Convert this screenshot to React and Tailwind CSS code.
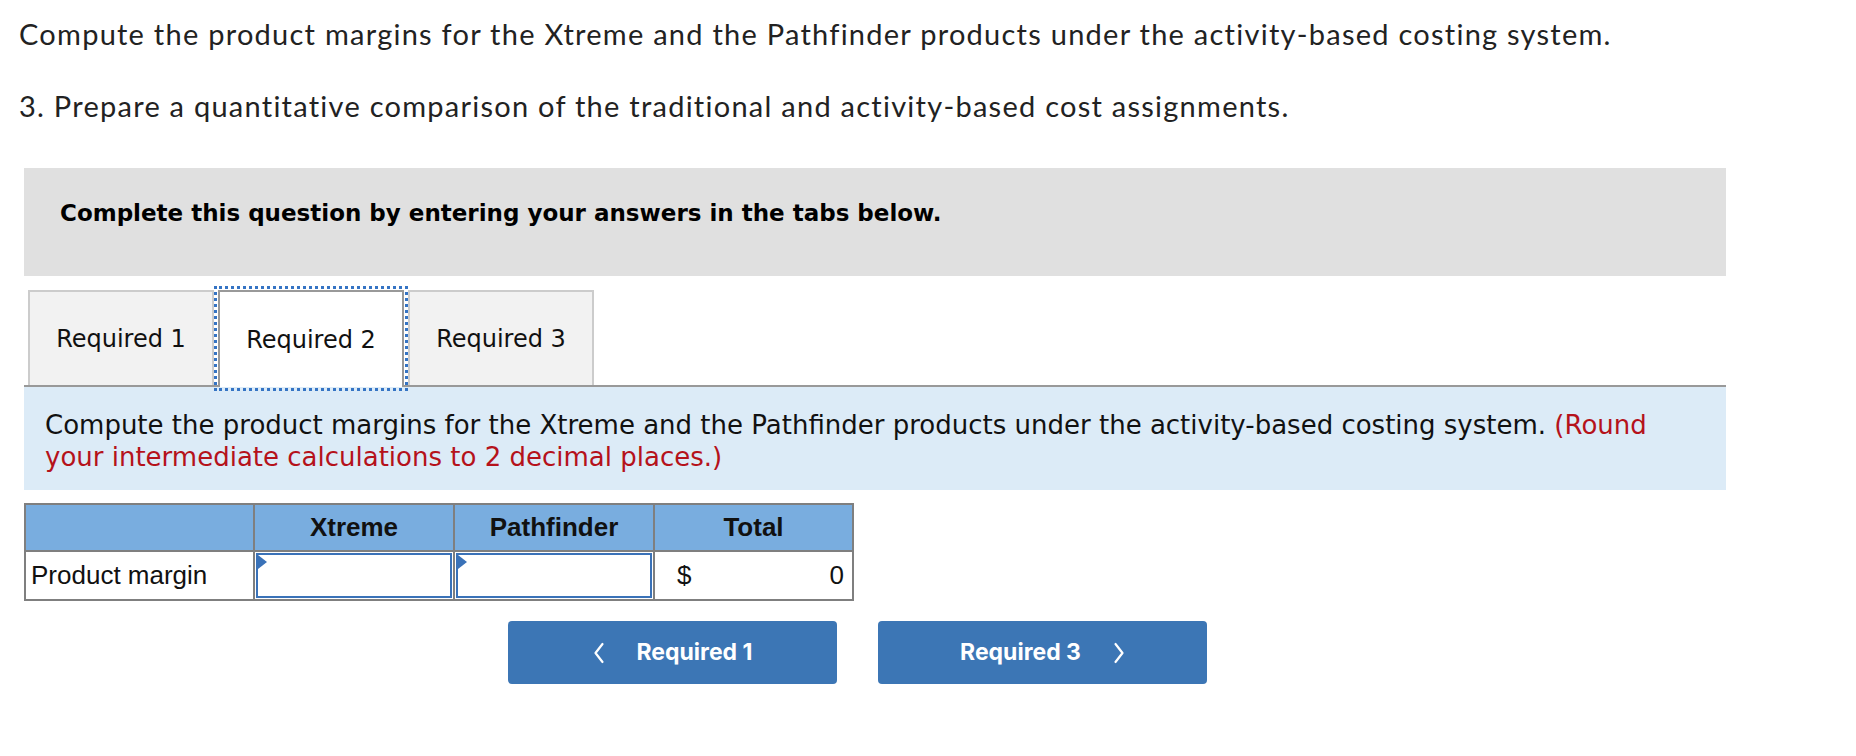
import React from "react";

const tahoma = { fontFamily: '"DejaVu Sans", Verdana, sans-serif' };

function ChevronLeft() {
  return (
    <svg width="12" height="22" viewBox="0 0 12 22" fill="none" stroke="white" strokeWidth="2.2" strokeLinecap="round" strokeLinejoin="round">
      <path d="M9.5 2 L2.5 11 L9.5 20" />
    </svg>
  );
}
function ChevronRight() {
  return (
    <svg width="12" height="22" viewBox="0 0 12 22" fill="none" stroke="white" strokeWidth="2.2" strokeLinecap="round" strokeLinejoin="round">
      <path d="M2.5 2 L9.5 11 L2.5 20" />
    </svg>
  );
}

function InputCell() {
  return (
    <td className="border-2 border-[#7f7f7f] p-0 h-[49px] bg-white">
      <div className="relative h-[45px] mx-[1px] border-2 border-[#3a72b8] bg-white">
        <div className="absolute left-0 top-0 w-0 h-0 border-t-[7px] border-b-[7px] border-l-[9px] border-t-transparent border-b-transparent border-l-[#3a72b8]" />
      </div>
    </td>
  );
}

export default function App() {
  return (
    <div className="w-[1856px] h-[756px] bg-white overflow-hidden">
      <div className="pl-[19px] pt-[15px] text-[29px] leading-[38px] tracking-[1.25px] text-[#222]" style={{ fontFamily: 'Lato, "Open Sans", sans-serif' }}>
        <p>Compute the product margins for the Xtreme and the Pathfinder products under the activity-based costing system.</p>
        <p className="mt-[34px]">3. Prepare a quantitative comparison of the traditional and activity-based cost assignments.</p>
      </div>

      <div className="ml-[24px] w-[1702px] mt-[43px]">
        <div className="h-[108px] bg-[#e0e0e0] pl-[36px] pt-[31px]">
          <span className="block text-[23px] leading-[28px] font-bold text-black" style={tahoma}>
            Complete this question by entering your answers in the tabs below.
          </span>
        </div>

        <div className="mt-[14px] flex gap-1 pl-1 border-b-2 border-[#999] h-[97px] items-start" style={tahoma}>
          <div className="w-[186px] h-[95px] bg-[#f2f2f2] border-2 border-b-0 border-[#cccccc] flex items-center justify-center text-[24px] text-[#111]">
            Required 1
          </div>
          <div className="w-[186px] h-[97px] -mb-[2px] bg-white border-2 border-b-0 border-[#999] outline-[3px] outline-dotted outline-[#3574c4] outline-offset-[1px] flex items-center justify-center text-[24px] text-[#111]">
            Required 2
          </div>
          <div className="w-[186px] h-[95px] bg-[#f2f2f2] border-2 border-b-0 border-[#cccccc] flex items-center justify-center text-[24px] text-[#111]">
            Required 3
          </div>
        </div>

        <div className="bg-[#dcebf7] h-[103px] pl-[21px] pt-[22px] pr-[40px] text-[26px] leading-[32px] text-[#111]" style={tahoma}>
          Compute the product margins for the Xtreme and the Pathfinder products under the activity-based costing system.{" "}
          <span className="text-[#b5121b]">(Round your intermediate calculations to 2 decimal places.)</span>
        </div>

        <table className="mt-[13px] border-collapse border-2 border-[#7f7f7f] text-[26px] text-[#111]" style={{ fontFamily: '"Liberation Sans", Arial, sans-serif' }}>
          <thead>
            <tr className="bg-[#79addf] h-[47px]">
              <th className="w-[229px] border-2 border-[#7f7f7f]"></th>
              <th className="w-[200px] border-2 border-[#7f7f7f] font-bold text-center">Xtreme</th>
              <th className="w-[200px] border-2 border-[#7f7f7f] font-bold text-center">Pathfinder</th>
              <th className="w-[199px] border-2 border-[#7f7f7f] font-bold text-center">Total</th>
            </tr>
          </thead>
          <tbody>
            <tr className="h-[49px]">
              <td className="border-2 border-[#7f7f7f] pl-[5px] font-normal">Product margin</td>
              <InputCell />
              <InputCell />
              <td className="border-2 border-[#7f7f7f] px-[8px]">
                <div className="flex justify-between pl-[14px]">
                  <span>$</span>
                  <span>0</span>
                </div>
              </td>
            </tr>
          </tbody>
        </table>
      </div>

      <div className="mt-[20px] ml-[508px] flex gap-[41px]" style={{ fontFamily: 'Inter, "Noto Sans", sans-serif' }}>
        <button className="w-[329px] h-[63px] rounded-[4px] bg-[#3c76b5] text-white text-[23px] font-bold flex items-center justify-center gap-[32px]">
          <ChevronLeft />
          <span>Required 1</span>
        </button>
        <button className="w-[329px] h-[63px] rounded-[4px] bg-[#3c76b5] text-white text-[23px] font-bold flex items-center justify-center gap-[32px]">
          <span>Required 3</span>
          <ChevronRight />
        </button>
      </div>
    </div>
  );
}
